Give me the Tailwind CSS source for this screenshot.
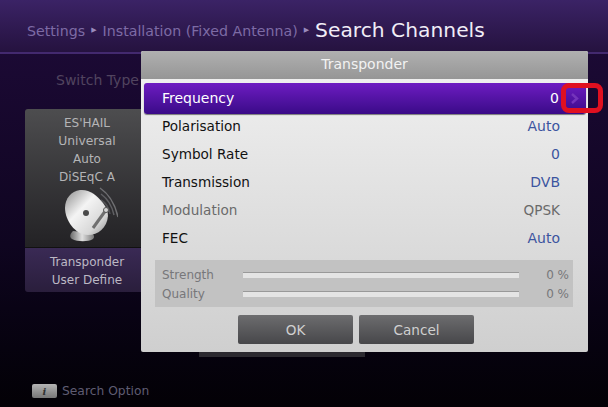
<!DOCTYPE html>
<html lang="en">
<head>
    <meta charset="UTF-8">
    <title>Search Channels</title>
    <script src="https://cdn.jsdelivr.net/npm/@tailwindcss/browser@4"></script>
</head>
<body class="m-0 bg-black">
    <div class="relative w-[608px] h-[407px] overflow-hidden font-['DejaVu_Sans',sans-serif] bg-gradient-to-b from-[#1f0b3a] via-[#0f0520] via-60% to-[#030106]">
        <!-- header -->
        <div class="h-[54px] border-b-2 border-[#43296f] bg-gradient-to-b from-[#3b2366] to-[#25123f] pl-[27px] pt-[14px] flex items-center gap-[6px] pb-[6px]">
            <span class="text-[14.2px] text-[#7d6ba5] leading-[20px] mt-[1px]">Settings</span>
            <span class="text-[7px] text-[#9a8bbd]">▶</span>
            <span class="text-[14.2px] text-[#7d6ba5] leading-[20px] mt-[1px]">Installation (Fixed Antenna)</span>
            <span class="text-[7px] text-[#9a8bbd]">▶</span>
            <span class="text-[20.25px] text-[#f1edf7] leading-[24px] mt-[-1px]">Search Channels</span>
        </div>

        <!-- left column -->
        <div class="ml-[25px] w-[124px]">
            <div class="pl-[31px] pt-[16px] h-[55px] text-[14px] leading-[20px] text-[#51445f] whitespace-nowrap overflow-hidden">Switch Type</div>
            <div class="h-[139px] rounded-t-[3px] bg-gradient-to-b from-[#4d4d4f] to-[#232225] pt-[5px] flex flex-col items-center text-[12px] leading-[18px] text-[#b4b4b6] border-b border-[#111]">
                <span>ES'HAIL</span>
                <span class="text-[12.3px]">Universal</span>
                <span>Auto</span>
                <span>DiSEqC A</span>
                <svg width="62" height="58" viewBox="0 0 62 58" class="mt-[-1px]">
                    <defs>
                        <linearGradient id="dish" x1="0" y1="0" x2="1" y2="1">
                            <stop offset="0" stop-color="#8c8c8c"/>
                            <stop offset="0.4" stop-color="#f4f4f4"/>
                            <stop offset="0.75" stop-color="#d8d8d8"/>
                            <stop offset="1" stop-color="#8e8e8e"/>
                        </linearGradient>
                        <linearGradient id="base" x1="0" y1="0" x2="1" y2="0">
                            <stop offset="0" stop-color="#6a6a6a"/>
                            <stop offset="0.5" stop-color="#e0e0e0"/>
                            <stop offset="1" stop-color="#777"/>
                        </linearGradient>
                    </defs>
                    <path d="M44 3c9 6 15 16 18 29" fill="none" stroke="#6f6f72" stroke-width="1.5"/>
                    <path d="M45 9c7 5 11 12 13 21" fill="none" stroke="#606064" stroke-width="1.5"/>
                    <path d="M45 15c5 3 8 8 9 14" fill="none" stroke="#525256" stroke-width="1.5"/>
                    <path d="M17 46c-3 3-4 6-1 8 5 3 17 3 21 0 2-2 1-4-1-6z" fill="url(#base)"/>
                    <path d="M24 5C15 6 9 14 9 23c0 12 10 27 23 27 10 0 19-7 20-19 0-5-2-9-5-13C41 10 33 4 24 5z" fill="url(#dish)"/>
                    <circle cx="30" cy="28" r="3" fill="#4a4a4a"/>
                    <path d="M37 43l13-18" stroke="#707070" stroke-width="3"/>
                    <circle cx="50" cy="25" r="2.5" fill="#d5d5d5" stroke="#555"/>
                </svg>
            </div>
            <div class="h-[44px] rounded-b-[3px] bg-gradient-to-b from-[#3a2a55] to-[#2a1e3c] pt-[5px] flex flex-col items-center text-[12px] leading-[18px] text-[#bcb8c4]">
                <span>Transponder</span>
                <span>User Define</span>
            </div>
        </div>

        <!-- hint -->
        <div class="absolute left-[32px] top-[383px] flex items-center gap-[5px]">
            <span class="w-[25px] h-[14px] rounded-[2px] bg-gradient-to-b from-[#b5b5b5] to-[#777] flex items-center justify-center font-['DejaVu_Serif',serif] italic font-bold text-[10px] text-[#333]">i</span>
            <span class="text-[12.3px] leading-[16px] text-[#5f5c72]">Search Option</span>
        </div>

        <!-- strip behind the dialog -->
        <div class="absolute left-[199px] top-[350px] w-[166px] h-[7px] bg-[#2c2a30]"></div>

        <!-- dialog -->
        <div class="absolute left-[141px] top-[51px] w-[447px] h-[301px] rounded-[2px] bg-gradient-to-b from-[#f2f2f2] to-[#cfcfcf] flex flex-col">
            <div class="h-[28px] rounded-t-[2px] bg-gradient-to-b from-[#b0b0b0] to-[#969696] text-center text-[14px] leading-[27px] text-[#f2f2f2]">Transponder</div>

            <div class="mt-[4px] pl-[3px] pr-[2px]">
                <div class="h-[31px] rounded-[3px] bg-gradient-to-b from-[#6e1cc2] to-[#3a0a88] shadow-[0_1px_1px_#777] flex items-center justify-between pl-[18px] pr-[27px] text-[14px] text-white">
                    <span>Frequency</span>
                    <span>0</span>
                </div>
            </div>

            <div class="-mt-[2px] px-[21px] pr-[28px] text-[13.6px] text-[#111] flex flex-col">
                <div class="h-[28px] flex items-center justify-between"><span>Polarisation</span><span class="text-[#3c549f] text-[14px]">Auto</span></div>
                <div class="h-[28px] flex items-center justify-between"><span>Symbol Rate</span><span class="text-[#3c549f] text-[14px]">0</span></div>
                <div class="h-[28px] flex items-center justify-between"><span>Transmission</span><span class="text-[#3c549f] text-[14px]">DVB</span></div>
                <div class="h-[28px] flex items-center justify-between text-[#6a6a6a]"><span>Modulation</span><span>QPSK</span></div>
                <div class="h-[28px] flex items-center justify-between"><span>FEC</span><span class="text-[#3c549f] text-[14px]">Auto</span></div>
            </div>

            <div class="mt-[8px] ml-[14px] w-[418px] h-[47px] bg-[#c2c2c2] flex flex-col justify-center gap-[3px] pt-[2px] pl-[7px] pr-[4px] text-[12px] text-[#77777a]">
                <div class="h-[16px] flex items-center">
                    <span class="w-[81px]">Strength</span>
                    <div class="w-[276px] h-[6px] bg-[#e4e4e4] border-t border-[#999]"></div>
                    <span class="ml-auto">0 %</span>
                </div>
                <div class="h-[16px] flex items-center">
                    <span class="w-[81px]">Quality</span>
                    <div class="w-[276px] h-[6px] bg-[#e4e4e4] border-t border-[#999]"></div>
                    <span class="ml-auto">0 %</span>
                </div>
            </div>

            <div class="mt-[8px] ml-[97px] flex gap-[6px] text-[13.6px] text-[#d0d0d0]">
                <div class="w-[115px] h-[29px] pt-[2px] rounded-[2px] bg-gradient-to-b from-[#6d6d6f] to-[#47474a] flex items-center justify-center">OK</div>
                <div class="w-[115px] h-[29px] pt-[2px] rounded-[2px] bg-gradient-to-b from-[#6d6d6f] to-[#47474a] flex items-center justify-center">Cancel</div>
            </div>
        </div>

        <!-- arrow and red annotation -->
        <svg class="absolute left-[570px] top-[93px]" width="10" height="11" viewBox="0 0 10 11"><path d="M2 1l5 4.5-5 4.5" fill="none" stroke="#7434bb" stroke-width="2.5"/></svg>
        <div class="absolute left-[561px] top-[83px] w-[42px] h-[30px] border-[5px] border-[#e01020] rounded-[8px]"></div>
    </div>
</body>
</html>
